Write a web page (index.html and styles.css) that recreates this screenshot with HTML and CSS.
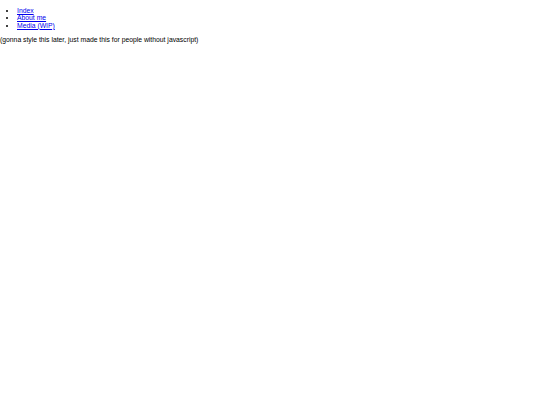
FILE: index.html
```html
<!DOCTYPE html>
<html>
<head>
<meta charset="utf-8">
<link rel="stylesheet" href="styles.css">
</head>
<body class="page">
<ul class="nav">
<li><a href="#">Index</a></li>
<li><a href="#">About me</a></li>
<li><a href="#">Media (WIP)</a></li>
</ul>
<p class="note">(gonna style this later, just made this for people without javascript)</p>
</body>
</html>
```
FILE: styles.css
```css
.page {
  margin: 0;
  font-family: "Liberation Sans", Arial, sans-serif;
  font-size: 6.8px;
  line-height: 1.1;
  color: #000;
  background: #fff;
}
.nav {
  margin: 1em 0;
  padding-left: 2.5em;
}
.nav a {
  color: #0000ee;
}
.note {
  margin: 1em 0;
}
```
